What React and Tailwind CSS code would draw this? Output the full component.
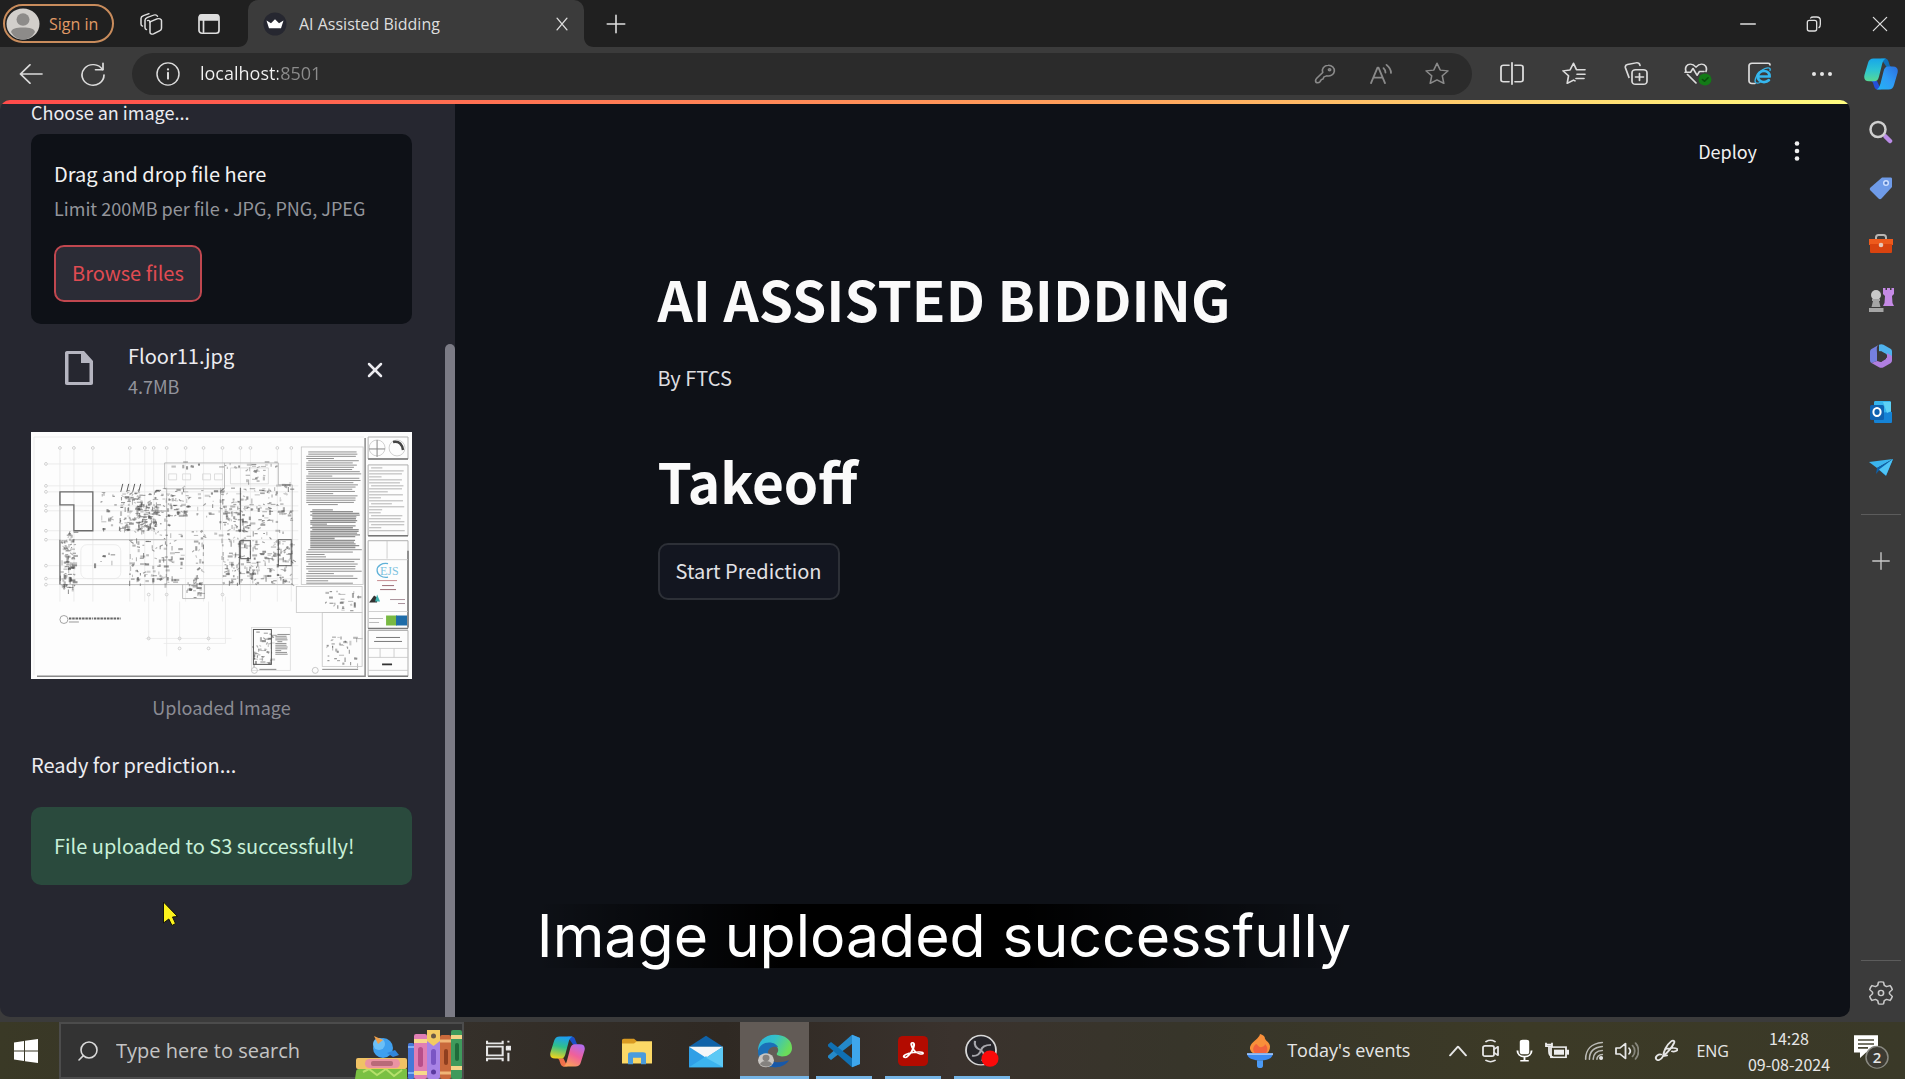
import React from "react";
import { Search, X } from "lucide-react";

const SRC = "font-['Noto_Sans_CJK_SC','Open_Sans',sans-serif]";
const UI = "font-['Open_Sans','Noto_Sans',sans-serif]";

function Line({ className = "size-6", w = 1.6, box = "0 0 24 24", children }) {
  return (
    <svg viewBox={box} preserveAspectRatio="none" className={className} fill="none" stroke="currentColor" strokeWidth={w} strokeLinecap="round" strokeLinejoin="round" aria-hidden="true">
      {children}
    </svg>
  );
}

function IconButton({ label, className = "", children }) {
  return (
    <button type="button" aria-label={label} className={`flex shrink-0 items-center justify-center ${className}`}>
      {children}
    </button>
  );
}

/* ---------- browser chrome ---------- */

function TabStrip() {
  return (
    <div className="flex h-[47px] items-stretch bg-[#202020] text-[#dedede]">
      <button type="button" className="my-1 ml-[3px] flex w-[111px] items-center gap-[9px] rounded-full border-2 border-[#c98c5c] pl-px text-[16px] text-[#e09a66]">
        <svg viewBox="0 0 34 36" preserveAspectRatio="none" className="h-8 w-[34px]" aria-hidden="true">
          <ellipse cx="17" cy="18" rx="16.500" ry="17.500" fill="#d2cfcb" />
          <ellipse cx="17" cy="13" rx="6.500" ry="7" fill="#8d8b89" />
          <path d="M5 27c1-4 5-5 12-5s11 1 12 5c-3 6-7 8.500-12 8.500S8 33 5 27z" fill="#8d8b89" />
        </svg>
        <span className="whitespace-nowrap">Sign in</span>
      </button>
      <IconButton label="Workspaces" className="ml-5 w-[34px]">
        <Line className="size-6" w={1.5} box="0 0 24 28">
          <path d="M11 11.500l7-3.500c2-.800 4.500 0 4.500 2v9c0 1.500-.5 2.300-2 3l-6 3.500c-1.800.800-3.500 0-3.500-2z" />
          <path d="M7.500 20.500c-1-.5-1.500-1-1.500-2.500V9.500C6 8 7 7 8.500 6.300L15 3.500c1.500-.5 3 0 3.500 1.500" />
          <path d="M3.500 16.500C2.500 16 2 15.500 2 14V7.500C2 6 2.800 5 4.500 4.300L10 2" />
          <path d="M11 12c0-1.500-1-2.500-2.500-2" />
        </Line>
      </IconButton>
      <IconButton label="Tab actions menu" className="ml-6 w-[34px]">
        <Line className="size-[22px]" w={1.700} box="0 0 22 24">
          <rect x="1" y="2" width="20" height="20" rx="3" />
          <path d="M2 2.500h18v5H2z" fill="currentColor" />
          <path d="M5.500 8v13" />
        </Line>
      </IconButton>
      <div className="relative ml-[22px] flex w-[336px] items-center rounded-t-[10px] bg-[#3b3b3b] pr-3 pl-[15px]">
        <svg viewBox="0 0 10 10" className="absolute bottom-0 -left-[10px] size-[10px]" aria-hidden="true"><path d="M10 0v10H0C6 10 10 6 10 0z" fill="#3b3b3b" /></svg>
        <svg viewBox="0 0 10 10" className="absolute -right-[10px] bottom-0 size-[10px]" aria-hidden="true"><path d="M0 0v10h10C4 10 0 6 0 0z" fill="#3b3b3b" /></svg>
        <svg viewBox="0 0 24 28" preserveAspectRatio="none" className="size-6" aria-hidden="true">
          <ellipse cx="12" cy="14" rx="11.500" ry="13.500" fill="#262730" />
          <path d="M3.500 10l4.500 3 4-4.500 4 4.500 4.500-3-2.500 9H6z" fill="#fff" />
        </svg>
        <span className="ml-3 flex-1 truncate text-[16px]">AI Assisted Bidding</span>
        <IconButton label="Close tab" className="size-5"><Line className="size-[14px]" w={2.300}><path d="M3.500 2l17 20M20.500 2l-17 20" /></Line></IconButton>
      </div>
      <IconButton label="New tab" className="ml-[18px] w-7"><Line className="size-5" w={1.900}><path d="M12 1.500v21M1.500 12h21" /></Line></IconButton>
      <div className="ml-auto flex items-center gap-10 pr-3">
        <IconButton label="Minimize" className="w-[26px]"><Line className="size-4" w={2}><path d="M1 12h22" /></Line></IconButton>
        <IconButton label="Restore" className="w-[26px]"><Line className="size-4" w={2}><rect x="2" y="6.500" width="14" height="16" rx="3" /><path d="M7 3c1-1.500 2-1.500 4-1.500h5c3.500 0 5.500 1.500 5.500 5v6c0 2.500-.5 4-2 5" /></Line></IconButton>
        <IconButton label="Close" className="w-[26px]"><Line className="size-4" w={1.900}><path d="M2 2l20 20M22 2L2 22" /></Line></IconButton>
      </div>
    </div>
  );
}

function CopilotBlue({ className }) {
  return (
    <svg viewBox="0 0 34 32" className={className} aria-hidden="true">
      <defs>
        <linearGradient id="cb1" x1="0" y1="0" x2="0" y2="1"><stop offset="0" stopColor="#17a6ea" /><stop offset=".5" stopColor="#2cc3d3" /><stop offset="1" stopColor="#57d994" /></linearGradient>
        <linearGradient id="cb2" x1="1" y1="0" x2="0" y2="1"><stop offset="0" stopColor="#2b6fe0" /><stop offset=".5" stopColor="#2f9bf5" /><stop offset="1" stopColor="#22b4f3" /></linearGradient>
      </defs>
      <path d="M17 .5h4c3 0 3.500 3 4.500 6 .5 2 1.500 2.500 3 2.500h-6z" fill="#0f6fb8" />
      <path d="M7 23h6l4 8.500h-3c-3 0-3.500-2-4.500-5C9 24.500 8.500 23.500 7 23z" fill="#2450d8" />
      <path d="M9.500 .5H22c-2.500 1-3.200 3-4 6l-3 12c-1 4-2.500 4.800-5 4.800H5c-4 0-5.500-2.500-4.500-6.500L4 5C4.800 2 6.500.5 9.500.5z" fill="url(#cb1)" />
      <path d="M24.500 31.500H12.500c2.500-1 3-3 4-6l3-12c1-4 2.500-5 5-5H29c4 0 5.500 2.500 4.500 6.500L30 27c-.8 3-2.500 4.500-5.500 4.500z" fill="url(#cb2)" />
    </svg>
  );
}

function Toolbar() {
  return (
    <div className="flex h-[53px] items-center bg-[#3b3b3b] text-[#dcdcdc]">
      <IconButton label="Back" className="ml-[18px] w-[26px]"><Line className="h-5 w-6" w={1.800}><path d="M23 12H2M11 1L1.500 12l9.500 11" /></Line></IconButton>
      <IconButton label="Refresh" className="ml-9 w-[26px]"><Line className="size-6" w={1.700} box="0 0 24 28"><path d="M21.500 9A11 12 0 1 0 23 15" /><path d="M22 1.500v7.500H14.500" /></Line></IconButton>
      <form className="ml-[26px] flex h-[42px] flex-1 items-center rounded-full bg-[#2b2b2b] pr-[23px] pl-6">
        <IconButton label="View site information" className="w-6"><Line className="size-6" w={1.500} box="0 0 24 28"><ellipse cx="12" cy="14" rx="11" ry="13" /><path d="M12 12.500v7" strokeWidth="2" /><path d="M12 8.500v.3" strokeWidth="2.200" /></Line></IconButton>
        <input aria-label="Address" defaultValue="localhost:8501" spellCheck={false} className="ml-5 min-w-0 flex-1 bg-[linear-gradient(to_right,#f2f2f2_78px,#8c8c8c_78px)] bg-clip-text text-[18px] text-transparent outline-none" />
        <div className="flex items-center gap-8 text-[#8a8a8a]">
          <IconButton label="Saved password" className="w-6"><Line className="h-5 w-[22px]" w={1.800}><path d="M15.500 1.500a6.500 6.500 0 0 0-6 8.800L3 17c-1.200 1.200-1.300 1.800-1.300 3 0 1.800 1 2.500 2.500 2.500 1 0 1.600-.4 2.300-1.200l1.500-2.500 1.800-.8 1-2.500 3-1.300a6.500 6.500 0 1 0 1.700-12.700z" /><circle cx="17" cy="7" r="1.200" /></Line></IconButton>
          <IconButton label="Read aloud" className="w-6"><Line className="h-[22px] w-6" w={1.800}><path d="M2 22L8.500 5h1L16 22M4.500 16h9" /><path d="M14.500 5.500c1.500 1.500 2 3 2 5M17.500 2c3 2.500 4.500 5 4.500 9" /></Line></IconButton>
          <IconButton label="Add this page to favorites" className="w-6"><Line className="h-[23px] w-6" w={1.600} box="0 0 24 28"><path d="M12 1.500l3.200 8.300 7.800 1-5.700 6 1.500 9.200L12 21.800 5.200 26l1.500-9.200-5.700-6 7.800-1z" /></Line></IconButton>
        </div>
      </form>
      <div className="flex items-center gap-[38px] pr-[7px] pl-7">
        <IconButton label="Split screen" className="w-6"><Line className="h-[23px] w-6" w={1.800} box="0 0 24 28"><path d="M9 4H3.500C2 4 1 5 1 6.500v15C1 23 2 24 3.500 24H9M15 4h5.500C22 4 23 5 23 6.500v15c0 1.500-1 2.500-2.500 2.500H15M12 1v26" /></Line></IconButton>
        <IconButton label="Favorites" className="w-6"><Line className="h-[23px] w-6" w={1.700} box="0 0 24 28"><path d="M13 23l-1.500-1-6.300 4 1.300-9.200L1 10.800l7-1 3.500-8.300 3 8H23M15 15h8M14 20h8" /></Line></IconButton>
        <IconButton label="Collections" className="w-6"><Line className="size-6" w={1.700} box="0 0 24 28"><rect x="8" y="9" width="15" height="17" rx="3.500" /><path d="M15.500 13.500v8M11.500 17.500h8M5 18L1.500 7c-.5-2 0-3.500 2-4L12 1c2-.5 3.500.5 4 3" /></Line></IconButton>
        <IconButton label="Browser essentials" className="w-6">
          <Line className="h-6 w-7 shrink-0" w={1.700} box="0 0 28 28"><path d="M2 11c-1.500-5 1-8.500 4.500-8.500 2.500 0 4 1.500 5.500 3.500 1.500-2 3-3.500 5.500-3.500C21 2.500 23.500 6 22 11M3.500 14.500L12 24.500M1 12h5.500L9 7.500l4 8 2.500-4.500H20" /><ellipse cx="21" cy="20.500" rx="6.500" ry="7" fill="#137a17" stroke="none" /><path d="M18.500 20.500l2 2 3.500-4" stroke="#0b4d0e" /></Line>
        </IconButton>
        <IconButton label="Internet Explorer mode" className="w-6">
          <Line className="size-6" w={1.700} box="0 0 24 28"><path d="M7 25H4c-2 0-3-1-3-3V4.500C1 2.500 2 1.500 4 1.500h16c1.500 0 2 .5 2 2" /><path d="M9.500 17h12c.3-4-2-6.500-5.500-6.500-3.700 0-6.300 3-6.300 6.500s2.600 6.500 6.300 6.500c2 0 3.600-.8 4.800-2.300" stroke="#35b7ee" strokeWidth="3" /><path d="M22 10c1-3-1.500-4-5-2.500S9 13.500 7.500 19s1 6.500 4.500 5" stroke="#35b7ee" strokeWidth="1.300" /></Line>
        </IconButton>
        <IconButton label="Settings and more" className="w-6"><svg viewBox="0 0 24 6" className="h-[6px] w-6" fill="#e6e6e6" aria-hidden="true"><circle cx="4" cy="3" r="2" /><circle cx="12" cy="3" r="2" /><circle cx="20" cy="3" r="2" /></svg></IconButton>
        <IconButton label="Copilot" className="-ml-2 w-[34px]"><CopilotBlue className="h-8 w-[34px]" /></IconButton>
      </div>
    </div>
  );
}

function EdgeSidebar() {
  return (
    <nav aria-label="Browser sidebar" className="flex w-[55px] shrink-0 flex-col items-center bg-[#3b3b3b] pt-[20px] pl-[6px] text-[#c9c9c9]">
      <div className="flex flex-col items-center gap-8">
        <IconButton label="Search" className="size-6"><svg viewBox="0 0 24 24" className="size-6" fill="none" aria-hidden="true"><path d="M16.500 16.500l4.500 4.500" stroke="#b98be6" strokeWidth="4.500" strokeLinecap="round" /><circle cx="9" cy="9.500" r="7.500" stroke="#cfcfcf" strokeWidth="2.500" /></svg></IconButton>
        <IconButton label="Shopping" className="size-6"><svg viewBox="0 0 24 24" className="size-6" aria-hidden="true"><path d="M13 1.500h8.500c1 0 1.500.5 1.500 1.500v8L12.500 22.500c-1 1-2 1-3 0L1.500 14.500c-1-1-1-2 0-3z" fill="#6f9be8" /><circle cx="17" cy="7" r="2.300" fill="#4f7ac8" stroke="#cfe0ff" strokeWidth="1.500" /></svg></IconButton>
        <IconButton label="Tools" className="size-6"><svg viewBox="0 0 26 24" className="h-6 w-[26px] shrink-0" aria-hidden="true"><path d="M8 7V5.500C8 4 9 3 10.500 3h5C17 3 18 4 18 5.500V7" fill="none" stroke="#b8b5b2" strokeWidth="2" /><path d="M1 7h24v6H1z" fill="#ee5a1c" /><path d="M2 12h22v7.500c0 1-.5 1.500-1.500 1.500h-19C2.500 21 2 20.500 2 19.500z" fill="#d9430f" /><circle cx="13" cy="13" r="2.300" fill="#e6c7b8" /></svg></IconButton>
        <IconButton label="Games" className="size-6"><svg viewBox="0 0 26 26" className="size-[26px] shrink-0" aria-hidden="true"><path d="M15 1h2.500v2H19V1h3v2h1.500V1H26v6l-2 2 .5 7 1.500 3H15l1.500-3 .5-7-2-2z" fill="#c58ae6" /><circle cx="8" cy="8" r="5" fill="#c9c9c9" /><path d="M4 12h8v2h-1l1.500 6h-9L5 14H4zM1 21h14.500v4H1z" fill="#a5a5a5" /></svg></IconButton>
        <IconButton label="Microsoft 365" className="size-6"><svg viewBox="0 0 24 24" className="size-6" aria-hidden="true"><path d="M10 .8c1.500-.8 3-.8 4.500 0l7 4c1 .7 1.500 1.700 1.500 3V15l-6-5-7-3z" fill="#4fb3ee" /><path d="M10 .8C7 2.500 8 5 8 9v8l-5.500 2C1.500 18.500 1 17.500 1 16V8c0-1.300.5-2.300 1.500-3z" fill="#7580e0" /><path d="M23 12v4c0 1.500-.5 2.500-1.500 3.200l-7 4c-1.500.8-3 .8-4.500 0l-7.500-4.300L8 17l4 1 6-4.500V9z" fill="#b07fe0" /><path d="M12 7l5 3v5l-5 3-4-2V9z" fill="#3b3b3b" /></svg></IconButton>
        <IconButton label="Outlook" className="size-6"><svg viewBox="0 0 24 24" className="size-6" aria-hidden="true"><path d="M5 2.500C5 1.500 5.500 1 6.500 1h14c1 0 1.500.5 1.500 1.500V13H5z" fill="#35b5ee" /><path d="M5 13l18-1v9.500c0 1-.5 1.500-1.500 1.500H6.500C5.500 23 5 22.500 5 21.500z" fill="#1583d6" /><path d="M14 2h8v9l-4 2z" fill="#5ed0f5" /><rect x="1" y="5" width="14" height="15" rx="1.500" fill="#0f62b0" /><ellipse cx="8" cy="12" rx="3.600" ry="4" fill="none" stroke="#fff" strokeWidth="2" /></svg></IconButton>
        <IconButton label="Drop" className="size-6"><svg viewBox="0 0 24 24" className="size-6" aria-hidden="true"><path d="M0 6l24-3-16 9z" fill="#3bb5ee" /><path d="M24 3L17 20l-8-7z" fill="#1d92e0" /><path d="M24 3L8 12l-1 6 3-3.500z" fill="#0c62ad" /><path d="M24 3L10 13.500l7 6z" fill="#4fc4f5" /></svg></IconButton>
      </div>
      <div className="mt-[34px] h-px w-10 bg-[#5c5c5c]" />
      <IconButton label="Customize" className="mt-9 size-5"><Line className="size-[18px]" w={1.800}><path d="M12 1v22M1 12h22" /></Line></IconButton>
      <div className="mt-auto h-px w-10 bg-[#5c5c5c]" />
      <IconButton label="Settings" className="mt-4 mb-[13px] h-8 w-6">
        <Line className="h-[26px] w-6" w={1.600} box="0 0 24 30">
          <path d="M9.500 2.500c1.600-.5 3.400-.5 5 0l.8 3.800 2.200 1.300 3.500-1.200c1.100 1.300 1.900 2.900 2.300 4.700L20.500 14v2l2.800 2.900c-.4 1.800-1.200 3.400-2.300 4.700l-3.500-1.200-2.200 1.300-.8 3.800c-1.600.5-3.400.5-5 0l-.8-3.800-2.200-1.300L3 23.600c-1.100-1.300-1.900-2.900-2.300-4.700L3.500 16v-2L.7 11.100C1.100 9.300 1.900 7.700 3 6.400l3.500 1.200 2.200-1.300z" />
          <ellipse cx="12" cy="15" rx="2.600" ry="3" />
        </Line>
      </IconButton>
    </nav>
  );
}

/* ---------- floor plan thumbnail ---------- */

function rng(seed) {
  let s = seed;
  return () => ((s = (s * 16807) % 2147483647) / 2147483647);
}

const CLUSTERS = [
  [88, 58, 38, 42, 130], [104, 70, 22, 30, 70], [29, 100, 14, 58, 100], [66, 58, 18, 40, 18],
  [124, 56, 14, 42, 26], [136, 56, 22, 30, 46], [164, 56, 20, 30, 16], [188, 56, 54, 44, 130],
  [244, 50, 18, 50, 34], [190, 106, 60, 46, 160], [248, 106, 16, 46, 34], [98, 106, 18, 46, 40],
  [118, 106, 34, 46, 54], [160, 100, 14, 56, 30], [155, 150, 18, 16, 22], [140, 30, 106, 6, 24],
  [100, 98, 140, 8, 24], [296, 205, 34, 28, 36], [294, 158, 36, 22, 26], [222, 200, 20, 34, 46],
  [214, 38, 20, 12, 16], [50, 122, 34, 14, 7],
];

function marks() {
  const r = rng(4711);
  const out = [];
  for (const [x, y, w, h, n] of CLUSTERS) {
    for (let i = 0; i < n; i++) {
      const px = x + r() * w;
      const py = y + r() * h;
      const k = r();
      const len = 1.5 + r() * 4;
      const o = 0.25 + r() * 0.4;
      const d = k < 0.45 ? `M${px} ${py}h${len}` : k < 0.75 ? `M${px} ${py}v${len}` : `M${px} ${py}l${len * 0.6} ${(r() - 0.5) * 5}`;
      out.push({ d, o, sw: r() < 0.3 ? 2.1 : 1.1 });
    }
  }
  return out;
}

function notes(x, y, w, h, step, seed) {
  const r = rng(seed);
  const out = [];
  for (let yy = y; yy < y + h; yy += step) out.push(`M${x + (r() < 0.2 ? 2 : 0)} ${yy}h${w * (r() < 0.22 ? 0.3 + r() * 0.3 : 0.85 + r() * 0.15)}`);
  return out.join("");
}

const MARKS = marks();

function FloorPlan() {
  const cols = [29, 43, 62, 99, 114, 123, 136, 155, 173, 192, 210, 220, 247, 261];
  const rows = [32, 54, 60, 74, 79, 99, 108, 134, 147, 153];
  return (
    <svg viewBox="0 0 382 248" className="block w-full bg-[#fdfdfd]" fill="none" stroke="#4b4b4b" role="img" aria-label="Floor plan Floor11.jpg">
      <g stroke="#e8e8e8" strokeWidth=".8">
        {cols.map((c) => <path key={c} d={`M${c} 18V170`} />)}
        {rows.map((c) => <path key={c} d={`M17 ${c}H268`} />)}
        <path d="M118 165v42M136 165v60M149 170v40M178 170v40M195 165v47M115 207h86M133 212h62" />
        <path d="M3 5h331M3 5v239" />
        <rect x="50" y="113" width="40" height="34" rx="6" />
      </g>
      <g stroke="#cfcfcf" strokeWidth="1">
        {cols.map((c) => <circle key={c} cx={c} cy="16" r="1.400" />)}
        {rows.map((c) => <circle key={c} cx="15" cy={c} r="1.400" />)}
        {[[118, 207], [149, 207], [178, 207], [149, 217], [178, 217], [118, 163], [136, 163], [192, 163]].map(([a, b]) => <circle key={`${a}-${b}`} cx={a} cy={b} r="1.400" />)}
      </g>
      <g stroke="#b0b0b0" strokeWidth=".8">
        <path d="M134 31h114v22M134 31v26h60M194 31v26M248 53h14v100H29V60M152 153v14h22v-14M136 56v97M136 108H43M190 56v42" />
        <path d="M138 42h8v6h-8zM152 42h8v6h-8zM172 42h8v6h-8zM184 42h8v6h-8zM200 36h38v16h-38z" stroke="#d5d5d5" />
      </g>
      <path d="M29 60h33v39H43V73H29zM43 73v26" stroke="#6a6a6a" strokeWidth="1.300" />
      <path d="M29 108v45M210 56v44M210 109h10v18h-10zM248 108h13v26h-13zM209 109v44" stroke="#777" strokeWidth="1.200" />
      {MARKS.map((m, i) => <path key={i} d={m.d} strokeOpacity={m.o} strokeWidth={m.sw} />)}
      <path d="M92 52l-2 8M98 52l-2 8M104 52l-2 8M110 52l-2 8" strokeWidth=".9" />
      <rect x="271" y="15" width="62" height="138" stroke="#c5c5c5" strokeWidth=".8" />
      <g stroke="#6b6b6b" strokeWidth="1" strokeOpacity=".75">
        <path d={notes(276, 20, 54, 54, 2.2, 11)} />
        <path d={notes(280, 78, 50, 38, 1.8, 23)} strokeWidth="1.300" />
        <path d={notes(276, 118, 54, 34, 2.4, 37)} />
        <path d={notes(245, 203, 13, 20, 1.8, 5)} />
        <path d={notes(339, 36, 36, 66, 3, 8)} strokeOpacity=".5" />
      </g>
      <rect x="266" y="155" width="66" height="26" stroke="#c5c5c5" strokeWidth=".8" />
      <rect x="292" y="181" width="40" height="54" stroke="#c5c5c5" strokeWidth=".8" />
      <rect x="221" y="196" width="39" height="43" stroke="#dadada" strokeWidth=".8" />
      <rect x="223" y="198" width="18" height="35" stroke="#555" />
      <path d="M6 245h329V6" stroke="#8a8a8a" strokeWidth="1.500" />
      <path d="M338 5h40v22h-40zM338 33h40v71h-40zM338 109h40v88M338 109v88h40M338 199h40v46h-40z" stroke="#b0b0b0" />
      <path d="M338 27h40M338 104h40M338 197h40M338 245h40M378 119v77" stroke="#777" strokeWidth="1.500" />
      <path d="M357 109v18M338 128h40M338 180h40M338 217h40M338 226h40M350 217v9M364 217v9M338 239h40" stroke="#c4c4c4" strokeWidth=".8" />
      <circle cx="347" cy="16" r="8" stroke="#c5c5c5" strokeWidth=".8" /><circle cx="367" cy="16" r="8" stroke="#c5c5c5" strokeWidth=".8" />
      <path d="M347 8v17M339 17h16" stroke="#888" />
      <path d="M363 10c6-1 9 2 10 8" stroke="#444" strokeWidth="2.500" />
      <path d="M358 132c-6-1-11 2-11 6.500s5 8 11 7" stroke="#5fb1d8" strokeWidth="1.300" />
      <text x="350" y="143" fill="#7fc3e0" stroke="none" fontSize="12" fontFamily="Liberation Serif, serif">EJS</text>
      <path d="M347 149h20" stroke="#c68a90" /><path d="M352 154h12M350 158h16" stroke="#9a6b75" />
      <path d="M339 171l5-7 3 2v5z" fill="#333" stroke="none" /><path d="M347 163l3 7h-5z" fill="#3fb3b0" stroke="none" />
      <path d="M360 168h15M368 172h7" stroke="#a8909a" /><path d="M339 187h14M339 191h10" stroke="#aaa" strokeWidth=".8" />
      <path d="M356 184h11v10h-11z" fill="#79b943" stroke="none" /><path d="M366 184h11v10h-11z" fill="#1e6ca8" stroke="none" />
      <path d="M346 206h24M344 210h28" stroke="#777" /><path d="M352 233h10" stroke="#333" strokeWidth="1.800" />
      <circle cx="33" cy="188" r="4" stroke="#999" strokeWidth=".9" /><path d="M38 187h24M63 187h27" stroke="#666" strokeWidth="1.800" strokeDasharray="2.500 .8" /><path d="M38 190.500h10" stroke="#999" />
      <circle cx="224" cy="239" r="3" stroke="#bbb" strokeWidth=".8" /><path d="M229 238h17M292 238h36" stroke="#888" /><circle cx="285" cy="239" r="3" stroke="#bbb" strokeWidth=".8" />
    </svg>
  );
}

/* ---------- application page ---------- */

function AppSidebar() {
  return (
    <aside className="relative flex w-[455px] shrink-0 bg-[#262730] text-[#ececf0]">
      <div className={`flex min-w-0 flex-1 flex-col pr-[33px] pl-[31px] ${SRC} text-[20px] leading-7`}>
        <label htmlFor="plan" className="text-[18px] leading-4">Choose an image...</label>
        <input id="plan" type="file" accept=".jpg,.png,.jpeg" className="sr-only" />
        <section className="mt-[14px] rounded-[10px] bg-[#0e1117] px-[23px] pt-[26px] pb-[22px]">
          <p className="text-[#f2f2f2]">Drag and drop file here</p>
          <p className="mt-2 text-[18px] leading-6 whitespace-nowrap text-[#93959b]">Limit 200MB per file <span className="font-['Open_Sans',sans-serif] text-[14px]">•</span> JPG, PNG, JPEG</p>
          <button type="button" className="mt-[22px] h-[57px] rounded-[10px] border-2 border-[#c0474f] bg-[#2b2c36] px-4 pb-px text-[#e04b52]">Browse files</button>
        </section>
        <div className="mt-[18px] flex items-start pl-[30px]">
          <svg viewBox="0 0 36 36" className="mt-2 size-9" aria-hidden="true"><path d="M6 1h17l9 10v22c0 1-.5 2-2 2H6c-1.500 0-2-1-2-2V3c0-1 .5-2 2-2zm1.500 3v28h21V13H20V4z" fill="#b5b5c0" /></svg>
          <div className="ml-[31px] flex-1">
            <p>Floor11.jpg</p>
            <p className="text-[18px] leading-8 text-[#93949c]">4.7MB</p>
          </div>
          <IconButton label="Remove file" className="mt-4 mr-[25px] size-6"><X className="size-6" strokeWidth={2.500} /></IconButton>
        </div>
        <figure className="mt-[30px]">
          <FloorPlan />
          <figcaption className="mt-4 text-center text-[18px] leading-6 text-[#8b8c94]">Uploaded Image</figcaption>
        </figure>
        <p className="mt-8">Ready for prediction...</p>
        <div role="alert" className="mt-7 rounded-[10px] bg-[#2a4a3d] px-[23px] py-[25px] text-[#c8f0d8]">File uploaded to S3 successfully!</div>
      </div>
      <div className="mt-[240px] w-[10px] shrink-0 rounded-t-full bg-[#7b7b85]" />
      <svg viewBox="0 0 18 26" className="absolute top-[797px] left-[162px] h-[26px] w-[18px]" aria-hidden="true"><path d="M1.500 1l14 14.500-5 .5 3 6.500-3.500 2-3.200-6.500L1.500 22z" fill="#fbf21c" stroke="#15150a" strokeWidth="1" /></svg>
    </aside>
  );
}

function MainPanel() {
  return (
    <main className={`relative min-w-0 flex-1 bg-[#0e1117] text-[#fafafa] ${SRC}`}>
      <div className="flex items-center justify-end gap-7 pt-[31px] pr-[41px]">
        <button type="button" className="text-[18px] leading-8 text-[#f0f0f0]">Deploy</button>
        <IconButton label="Main menu" className="h-8 w-6"><svg viewBox="0 0 6 22" className="h-[22px] w-[6px]" fill="#f0f0f0" aria-hidden="true"><circle cx="3" cy="3.500" r="2.300" /><circle cx="3" cy="11" r="2.300" /><circle cx="3" cy="18.500" r="2.300" /></svg></IconButton>
      </div>
      <div className="mx-auto w-full max-w-[990px] pt-[95px]">
        <h1 className="text-[55px] leading-[72px] font-bold">AI ASSISTED BIDDING</h1>
        <p className="mt-[30px] text-[20px] leading-7 text-[#dedee0]">By FTCS</p>
        <h1 className="mt-[52px] text-[55px] leading-[72px] font-bold">Takeoff</h1>
        <button type="button" className="mt-[27px] h-[57px] rounded-[10px] border-2 border-[#2d3037] bg-[#131620] px-4 pb-px text-[20px] text-[#e2e2e6]">Start Prediction</button>
      </div>
      <p className="absolute right-0 bottom-[49px] left-0 flex justify-center pr-[417px] text-[59px] leading-[64px] whitespace-nowrap text-white font-['Inter',sans-serif]">
        <span className="bg-[linear-gradient(to_right,transparent,#000_30%,#000_60%,transparent)]">Image uploaded successfully</span>
      </p>
    </main>
  );
}

/* ---------- taskbar ---------- */

function Books() {
  return (
    <svg viewBox="0 0 108 56" className="h-14 w-[108px] shrink-0" aria-hidden="true">
      <path d="M2 49c0-2 1-3 3-3h48v10H1z" fill="#7ac043" /><path d="M9 49l6-3 8 6 9-6 8 7 8-6" stroke="#b5e06b" strokeWidth="2" fill="none" />
      <rect x="2" y="35" width="51" height="11" rx="2" fill="#f0c265" /><rect x="11" y="36" width="35" height="9" rx="4.500" fill="#ea93a2" /><rect x="17" y="38" width="22" height="5" rx="2" fill="#b96a78" />
      <ellipse cx="29" cy="25" rx="10" ry="10" fill="#3fa0ef" /><ellipse cx="25" cy="21" rx="6" ry="6" fill="#6cc0f7" /><path d="M33 30l8-3 4 5-6 2z" fill="#2f86dc" /><path d="M20 13l4 8 5-4z" fill="#f0a04b" />
      <rect x="54" y="20" width="6" height="36" rx="1.500" fill="#4678d8" /><path d="M54 24h6M54 50h6" stroke="#7fb0f5" strokeWidth="2" />
      <rect x="60" y="11" width="13" height="45" rx="2" fill="#e07fb4" /><path d="M60 18h13M60 50h13" stroke="#f7d98a" strokeWidth="4" /><rect x="64" y="24" width="5" height="20" rx="2.500" fill="#b84f8a" />
      <rect x="73" y="7" width="13" height="49" rx="2" fill="#a883e6" /><path d="M73 7h13v11l-6.500 5-6.500-5z" fill="#f3cb62" /><circle cx="79.500" cy="13" r="2.500" fill="#6b5a48" /><rect x="77" y="26" width="5" height="16" rx="2.500" fill="#7a55c4" /><circle cx="79.500" cy="49" r="2.500" fill="#5b3aa0" />
      <rect x="86" y="12" width="11" height="44" rx="2" fill="#c9693c" /><path d="M86 18h11M86 50h11" stroke="#f0b577" strokeWidth="3" /><rect x="90" y="26" width="4" height="16" rx="2" fill="#8f3f1f" />
      <rect x="97" y="7" width="11" height="49" rx="2" fill="#3f9a5c" /><path d="M97 14h11M97 45h11" stroke="#f3d488" strokeWidth="4" /><rect x="101" y="20" width="4" height="18" rx="2" fill="#1f6b3a" />
    </svg>
  );
}

function TaskButton({ label, open, active, children }) {
  return (
    <button type="button" aria-label={label} className={`flex w-[69px] flex-col items-center ${active ? "bg-[#625b56]" : ""}`}>
      <span className="flex flex-1 items-center justify-center pt-1">{children}</span>
      <span className={`h-[3px] ${active ? "w-full" : "w-14"} ${open ? "bg-[#76b5e6]" : ""}`} />
    </button>
  );
}

function Taskbar() {
  return (
    <footer className="flex h-[57px] items-stretch bg-[linear-gradient(to_right,#3a3926_0%,#35302a_24%,#2f2923_38%,#3a322d_50%,#37352a_62%,#3c3a26_80%,#3a3928_100%)] text-[#e6e6e6]">
      <IconButton label="Start" className="w-[59px] pr-2"><svg viewBox="0 0 24 24" className="size-6" fill="#fff" aria-hidden="true"><path d="M0 3.500l10-1.500v9.500H0zM11 1.800L24 0v11.500H11zM0 12.500h10V22L0 20.500zM11 12.500h13V24l-13-1.800z" /></svg></IconButton>
      <label className="flex w-[405px] items-center border-2 border-[#4c4c4c] bg-[#333] pl-[15px] text-[#dadada]">
        <Search className="size-6 -scale-x-100" strokeWidth={1.600} />
        <input type="text" aria-label="Search" placeholder="Type here to search" className="ml-4 min-w-0 flex-1 bg-transparent text-[20px] outline-none placeholder:text-[#c4c4c4]" />
        <Books />
      </label>
      <TaskButton label="Task view"><Line className="h-6 w-[25px]" w={2} box="0 0 24 28"><path d="M1 2v3h15V2M1 26v-3h15v3M1 9h15v10H1zM21.500 2v2M21.500 16v10" strokeLinecap="butt" strokeLinejoin="miter" /><rect x="20" y="9" width="3.500" height="3.500" fill="#fff" /></Line></TaskButton>
      <TaskButton label="Copilot">
        <svg viewBox="0 0 34 32" preserveAspectRatio="none" className="h-[31px] w-[35px]" aria-hidden="true">
          <defs>
            <linearGradient id="cp1" x1=".5" y1="0" x2=".3" y2="1"><stop offset="0" stopColor="#1d9df0" /><stop offset=".45" stopColor="#2fc08c" /><stop offset="1" stopColor="#f2d51c" /></linearGradient>
            <linearGradient id="cp2" x1=".8" y1="0" x2=".3" y2="1"><stop offset="0" stopColor="#b06cf0" /><stop offset=".5" stopColor="#f0609a" /><stop offset="1" stopColor="#f9a15a" /></linearGradient>
          </defs>
          <path d="M17 .5h4c3 0 3.500 3 4.500 6 .5 2 1.500 2.500 3 2.500h-6z" fill="#1b50c8" />
          <path d="M7 23h6l4 8.500h-3c-3 0-3.500-2-4.500-5C9 24.500 8.500 23.500 7 23z" fill="#f0704a" />
          <path d="M9.500 .5H22c-2.500 1-3.200 3-4 6l-3 12c-1 4-2.500 4.800-5 4.800H5c-4 0-5.500-2.500-4.500-6.500L4 5C4.800 2 6.500.5 9.500.5z" fill="url(#cp1)" />
          <path d="M24.500 31.500H12.500c2.500-1 3-3 4-6l3-12c1-4 2.500-5 5-5H29c4 0 5.500 2.500 4.500 6.500L30 27c-.8 3-2.500 4.500-5.500 4.500z" fill="url(#cp2)" />
        </svg>
      </TaskButton>
      <TaskButton label="File Explorer"><svg viewBox="0 0 32 34" preserveAspectRatio="none" className="h-[27px] w-8" aria-hidden="true"><path d="M1 3c0-1 .5-2 2-2h10l3 3v6H1z" fill="#d99a22" /><path d="M1 7h12l3-3h15v28H1z" fill="#fbd866" /><path d="M7 33V21c0-2 1-3 3-3h12c2 0 3 1 3 3v12h-5v-8h-8v8z" fill="#4a9bdc" /></svg></TaskButton>
      <TaskButton label="Mail"><svg viewBox="0 0 36 42" preserveAspectRatio="none" className="h-[33px] w-9" aria-hidden="true"><path d="M1 15L18 1l17 14z" fill="#0f62a8" /><path d="M1 15h34v26H1z" fill="#2f9fe6" /><path d="M1 15h34L18 29z" fill="#f4f6f8" /><path d="M1 41l17-14 17 14z" fill="#3cb4ee" /><path d="M35 15v26L18 29z" fill="#5cc9f5" /></svg></TaskButton>
      <TaskButton label="Microsoft Edge" open active>
        <svg viewBox="0 0 36 44" preserveAspectRatio="none" className="h-[34px] w-9" aria-hidden="true">
          <defs><linearGradient id="ed1" x1="0" y1="0" x2="1" y2=".4"><stop offset="0" stopColor="#28b4e0" /><stop offset=".5" stopColor="#35c1c8" /><stop offset="1" stopColor="#6bdc5a" /></linearGradient></defs>
          <path d="M1 22C1 9 8 1 18 1c10 0 17 7 17 17 0 7-4 11-10 11-4 0-6-2-5-4 2-3 2-9-4-11C8 12 3 16 1 22z" fill="url(#ed1)" />
          <path d="M1 22c1-7 6-11 11-11 5 0 8 3 9 6-7-2-11 3-10 10 1 8 6 13 14 14-3 2-6 2-8 2C7 43 1 34 1 22z" fill="#1a6fb8" />
          <path d="M11 28c1 8 9 11 21 6-3 6-8 9-14 9S9 36 11 28z" fill="#1758a8" />
          <ellipse cx="9" cy="34" rx="8" ry="9" fill="#c9c6c2" /><ellipse cx="9" cy="31" rx="3.500" ry="4" fill="#85827f" /><path d="M3 39c1-3 3-4 6-4s5 1 6 4c-3 4-9 4-12 0z" fill="#85827f" />
        </svg>
      </TaskButton>
      <TaskButton label="Visual Studio Code" open><svg viewBox="0 0 34 42" preserveAspectRatio="none" className="size-[34px]" aria-hidden="true"><path d="M25 1l8 4v32l-8 4V12L4 32l-3-3v-2z" fill="#2489ca" /><path d="M1 15v-2l3-3 21 20v11L1 15z" fill="#1070b3" /><path d="M25 1l8 4v32l-8 4z" fill="#3ea6ec" /></svg></TaskButton>
      <TaskButton label="Adobe Acrobat" open><svg viewBox="0 0 30 40" preserveAspectRatio="none" className="size-[30px]" aria-hidden="true"><rect width="30" height="40" rx="5" ry="6" fill="#b30b00" /><path d="M14.500 9c2.500 0 2 6-1 12s-6 9-7.500 7 4-5 9-6 10-1 10 1-6 1.500-9-4-3.500-10-1.500-10z" fill="none" stroke="#fff" strokeWidth="2" /></svg></TaskButton>
      <TaskButton label="OBS Studio" open>
        <svg viewBox="0 0 34 44" preserveAspectRatio="none" className="size-[34px]" aria-hidden="true">
          <ellipse cx="16" cy="21" rx="15" ry="19" fill="#26252a" stroke="#d8d8d8" strokeWidth="1.800" />
          <path d="M10 9c-1 6 1 10 6 12M26 14c-5 0-9 2-10 7M17 35c3-5 3-10-1-14M7 28c5 1 8-2 9-7" stroke="#a6a6ac" strokeWidth="2.200" fill="none" />
          <ellipse cx="25" cy="32" rx="8.500" ry="10.500" fill="#fb0a0a" />
        </svg>
      </TaskButton>
      <div className="ml-auto flex items-center">
        <button type="button" className="flex items-center gap-[14px] text-[18px] whitespace-nowrap">
          <svg viewBox="0 0 26 44" preserveAspectRatio="none" className="h-[34px] w-[26px]" aria-hidden="true"><path d="M13 0c3 1 5 3 5 6 1 3 5 5 5 10 0 4-1 7-3 9H6c-3-3-4-7-2-11 2-5 8-8 9-14z" fill="#f98f3a" /><path d="M9 13c2 1 2 4 5 4 2 0 4-2 4-4 3 4 3 8 1 12H8c-3-4-2-9 1-12z" fill="#f2623d" /><path d="M0 25h26c0 5-4 8-9 9H9c-5-1-9-4-9-9z" fill="#3d8bf0" /><path d="M10 34h6v7c0 2-1 3-3 3s-3-1-3-3z" fill="#4b9af5" /><path d="M0 25h26v2H0z" fill="#a7c9fa" /></svg>
          Today's events
        </button>
        <div className="ml-9 flex items-center gap-[9px]">
          <IconButton label="Show hidden icons" className="w-6"><Line className="h-3 w-5" w={2} box="0 0 20 16"><path d="M2 14L10 2l8 12" /></Line></IconButton>
          <IconButton label="Meet now" className="w-6"><Line className="h-6 w-5" w={1.800} box="0 0 20 28"><rect x="2" y="8" width="11" height="12" rx="2" /><path d="M13 12l4-3v10l-4-3M5 3c3-2 6-2 9 0M5 25c3 2 6 2 9 0" /></Line></IconButton>
          <IconButton label="Microphone" className="w-6"><svg viewBox="0 0 18 30" preserveAspectRatio="none" className="h-[23px] w-[17px]" aria-hidden="true"><rect x="4" y="1" width="10" height="19" rx="3" fill="#fff" /><path d="M1.500 15c0 5 3 8 7.500 8s7.500-3 7.500-8M9 23v5M4.500 28.500h9" stroke="#fff" strokeWidth="2" fill="none" /></svg></IconButton>
          <IconButton label="Battery" className="w-6"><svg viewBox="0 0 24 20" preserveAspectRatio="none" className="h-[17px] w-6" fill="none" stroke="#eee" strokeWidth="1.800" aria-hidden="true"><rect x="6" y="6" width="15" height="12" /><path d="M22 10h1.500v4H22z" fill="#eee" /><path d="M9 9h10v6H9z" fill="#eee" stroke="none" /><path d="M1 1v4h6V1M1 3h6M4 5v6c0 4 1 6 4 7" /></svg></IconButton>
          <IconButton label="Wi-Fi" className="ml-1 w-6"><Line className="h-[19px] w-5" w={1.900}><path d="M2 23C2 11 9 3 22 2M6.500 23C6.500 14 12 8 22 7M11 23c0-6 4-11 11-11M15.500 23c0-3 2.500-6 6.500-6" opacity=".75" /><circle cx="20.500" cy="21.500" r="1.500" fill="currentColor" /></Line></IconButton>
          <IconButton label="Volume" className="w-6"><Line className="h-5 w-6" w={1.800}><path d="M1 8.500h4L10.500 3v18L5 15.500H1z" /><path d="M14 8.500c1.500 2 1.500 5 0 7" /><path d="M17.500 5.500c3 3.500 3 9.500 0 13M20.500 2.500c4 5 4 14 0 19" opacity=".45" /></Line></IconButton>
          <IconButton label="Pen" className="ml-[6px] w-6"><Line className="h-[23px] w-6" w={2} box="0 0 24 28"><path d="M9 21c1-7 4-14 8-18 2-2 4-1 3 2-2 5-6 11-11 16zM9 21c-2 5-6 6-7 3s3-6 5-5M12 12c5-1 9-2 11 0s-3 4-5 3M9 21l4-1" /></Line></IconButton>
        </div>
        <button type="button" className="ml-[18px] text-[16px]">ENG</button>
        <button type="button" className="ml-4 w-[88px] text-center text-[16px] leading-[26px] whitespace-nowrap font-['Noto_Sans_CJK_SC',sans-serif]"><span className="block">14:28</span><span className="block">09-08-2024</span></button>
        <IconButton label="2 new notifications" className="relative mr-4 ml-5 h-9 w-9">
          <svg viewBox="0 0 36 46" preserveAspectRatio="none" className="size-9" aria-hidden="true"><path d="M1 3h24v22H13l-6 7v-7H1z" fill="#fff" /><path d="M5 9h16M5 14h16M5 19h10" stroke="#4a4836" strokeWidth="2" /><ellipse cx="24" cy="31" rx="11" ry="14" fill="#3c3a32" stroke="#8a8a82" strokeWidth="1.500" /></svg>
          <span className="absolute right-0 bottom-[2px] w-6 text-center text-[15px] leading-5 font-semibold">2</span>
        </IconButton>
      </div>
    </footer>
  );
}

export default function App() {
  return (
    <div className={`flex min-h-screen flex-col overflow-hidden bg-[#3b3b3b] ${UI}`}>
      <TabStrip />
      <Toolbar />
      <div className="flex flex-1">
        <div className="mb-[5px] flex min-w-0 flex-1 flex-col overflow-hidden rounded-[10px]">
          <div className="h-1 bg-[linear-gradient(to_right,#ff4b4b,#ffa25c_60%,#fffd80)]" />
          <div className="flex flex-1">
            <AppSidebar />
            <MainPanel />
          </div>
        </div>
        <EdgeSidebar />
      </div>
      <Taskbar />
    </div>
  );
}
